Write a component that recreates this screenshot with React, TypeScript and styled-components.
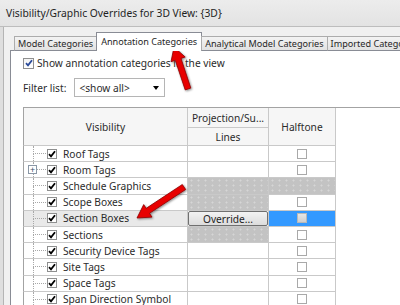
import { Fragment } from 'react';
import styled, { createGlobalStyle } from 'styled-components';

const GlobalStyle = createGlobalStyle`
	html, body {
		margin: 0;
		padding: 0;
		background: #f0f0f0;
	}
	body {
		width: 400px;
		height: 305px;
		overflow: hidden;
		font-family: 'Noto Sans', 'Liberation Sans', sans-serif;
		color: #2b2b2b;
	}
`;

const Window = styled.div`
	position: relative;
	width: 400px;
	height: 305px;
	overflow: hidden;
	display: flex;
	flex-direction: column;
	background: #f0f0f0;
`;

const TitleBar = styled.div`
	height: 26px;
	flex-shrink: 0;
	display: flex;
	align-items: center;
	padding-left: 6px;
	font-size: 10.3px;
	color: #1f1f1f;
	background: linear-gradient(#ececec, #e3e3e3);
	border-bottom: 1px solid #bdbdbd;
`;

const Body = styled.div`
	flex: 1;
	display: flex;
	flex-direction: column;
	padding: 5px 0 0 10px;
	background: linear-gradient(to right, #dedede 0 3px, #b4b4b4 3px 4px, #f0f0f0 4px);
`;

const TabStrip = styled.div`
	display: flex;
	align-items: flex-end;
	height: 19px;
	padding-left: 4px;
	margin-bottom: -1px;
	position: relative;
	z-index: 1;
`;

const Tab = styled.div<{ $active?: boolean }>`
	display: flex;
	align-items: center;
	white-space: nowrap;
	box-sizing: border-box;
	height: ${p => (p.$active ? '19px' : '15px')};
	padding: ${p => (p.$active ? '0 4px 2px' : '0 3px')};
	border: 1px solid ${p => (p.$active ? '#898c95' : '#acacac')};
	border-bottom: ${p => (p.$active ? 'none' : '1px solid #898c95')};
	background: ${p => (p.$active ? '#fff' : 'linear-gradient(#f3f3f3, #e2e2e2)')};
	font-size: 9.1px;
	color: #262626;
	margin-right: -1px;
`;

const Panel = styled.div`
	flex: 1;
	background: #fff;
	border: 1px solid #898c95;
	border-right: none;
	border-bottom: none;
	padding: 6px 0 0 12px;
`;

const OptionRow = styled.label`
	display: flex;
	align-items: center;
	gap: 3px;
	height: 12px;
	font-size: 10.2px;
`;

const BlueCheck = styled.span`
	width: 11px;
	height: 11px;
	box-sizing: border-box;
	border: 1px solid #8f8f8f;
	background: linear-gradient(#f4f4f4, #ffffff);
	display: flex;
	align-items: center;
	justify-content: center;
`;

const FilterRow = styled.div`
	display: flex;
	align-items: center;
	gap: 8px;
	margin-top: 9px;
	font-size: 10.2px;
`;

const Select = styled.div`
	width: 91px;
	height: 19px;
	box-sizing: border-box;
	border: 1px solid #b5b5b5;
	display: flex;
	align-items: center;
	justify-content: space-between;
	padding: 0 5px 0 4px;
	font-size: 10.2px;
`;

const Caret = styled.span`
	width: 0;
	height: 0;
	border-left: 3.5px solid transparent;
	border-right: 3.5px solid transparent;
	border-top: 4px solid #000;
`;

const Table = styled.div`
	margin-top: 10px;
	display: grid;
	grid-template-columns: 165px 81px 67px 1fr;
	grid-template-rows: 20px 18px;
	grid-auto-rows: 16.2px;
	border-top: 1px solid #a3a3a3;
	font-size: 10.2px;
`;

const HeadCell = styled.div<{ $rows?: number; $edge?: boolean; $blank?: boolean }>`
	grid-row: span ${p => p.$rows ?? 1};
	display: flex;
	align-items: center;
	justify-content: center;
	box-sizing: border-box;
	white-space: nowrap;
	overflow: hidden;
	background: ${p => (p.$blank ? '#fff' : '#f6f6f6')};
	border-left: ${p => (p.$edge ? '1px solid #a3a3a3' : 'none')};
	border-right: ${p => (p.$blank ? 'none' : '1px solid #c9c9c9')};
	border-bottom: ${p => (p.$blank ? 'none' : '1px solid #c9c9c9')};
`;

const VisCell = styled.div<{ $selected?: boolean }>`
	display: flex;
	align-items: stretch;
	box-sizing: border-box;
	padding-left: 9px;
	border-left: 1px solid #a3a3a3;
	border-right: 1px solid #c9c9c9;
	border-bottom: 1px solid #c9c9c9;
	background: ${p => (p.$selected ? '#e9e9e9' : '#fff')};
	white-space: nowrap;
`;

const Connector = styled.span`
	position: relative;
	width: 13px;
	display: flex;
	flex-direction: column;
	flex-shrink: 0;
`;

const ConnectorTop = styled.span`
	flex: 1;
	border-left: 1px dotted #a8a8a8;
	border-bottom: 1px dotted #a8a8a8;
`;

const ConnectorBottom = styled.span`
	flex: 1;
	border-left: 1px dotted #a8a8a8;
`;

const Expander = styled.span`
	position: absolute;
	left: -5px;
	top: 3px;
	width: 9px;
	height: 9px;
	box-sizing: border-box;
	border: 1px solid #8a97a6;
	background: #fff;
	display: flex;
	align-items: center;
	justify-content: center;
	font-size: 9px;
	line-height: 1;
	color: #3b4f6e;
`;

const TickBox = styled.span`
	align-self: center;
	width: 10px;
	height: 10px;
	box-sizing: border-box;
	margin-left: 1px;
	border: 1px solid #8e8f8f;
	background: #fff;
	display: flex;
	align-items: center;
	justify-content: center;
`;

const Label = styled.span`
	align-self: center;
	margin-left: 6px;
`;

const hatch = `
	background-color: #c3c3c3;
	background-image: radial-gradient(circle, #d6d6d6 0.7px, transparent 1.3px);
	background-size: 7px 5px;
`;

const LinesCell = styled.div<{ $kind: 'blank' | 'hatch' | 'button' }>`
	box-sizing: border-box;
	border-right: 1px solid #c9c9c9;
	border-bottom: 1px solid #c9c9c9;
	display: flex;
	align-items: stretch;
	${p => (p.$kind === 'hatch' ? hatch : 'background: #fff;')}
`;

const OverrideButton = styled.button`
	flex: 1;
	margin: 0;
	padding: 0;
	border: 1px solid #707070;
	border-radius: 2px;
	background: linear-gradient(#f3f3f3, #dcdcdc);
	font-family: inherit;
	font-size: 10.2px;
	color: #1e1e1e;
`;

const HalfCell = styled.div<{ $kind: 'check' | 'hatch' | 'selected' }>`
	box-sizing: border-box;
	border-right: 1px solid #c9c9c9;
	border-bottom: 1px solid #c9c9c9;
	display: flex;
	align-items: center;
	justify-content: center;
	${p =>
		p.$kind === 'hatch' ? hatch : p.$kind === 'selected' ? 'background: #3399ff;' : 'background: #fff;'}
`;

const HalfBox = styled.span<{ $dim?: boolean }>`
	width: 10px;
	height: 10px;
	box-sizing: border-box;
	border: 1px solid ${p => (p.$dim ? '#b8b8b8' : '#a9a9a9')};
	background: ${p => (p.$dim ? 'linear-gradient(#e6e6e6, #cfcfcf)' : '#fff')};
`;

const Filler = styled.div``;

const Overlay = styled.svg`
	position: absolute;
	left: 0;
	top: 0;
	pointer-events: none;
`;

const Check = ({ color }: { color: string }) => (
	<svg width='8' height='8' viewBox='0 0 8 8'>
		<path d='M1 4.2 L3 6.3 L7 1.2' fill='none' stroke={color} strokeWidth='1.8' />
	</svg>
);

type Row = {
	name: string;
	lines: 'blank' | 'hatch' | 'button';
	half: 'check' | 'hatch' | 'selected';
	expand?: boolean;
	selected?: boolean;
};

const rows: Row[] = [
	{ name: 'Roof Tags', lines: 'blank', half: 'check' },
	{ name: 'Room Tags', lines: 'blank', half: 'check', expand: true },
	{ name: 'Schedule Graphics', lines: 'hatch', half: 'hatch' },
	{ name: 'Scope Boxes', lines: 'hatch', half: 'check' },
	{ name: 'Section Boxes', lines: 'button', half: 'selected', selected: true },
	{ name: 'Sections', lines: 'hatch', half: 'check' },
	{ name: 'Security Device Tags', lines: 'blank', half: 'check' },
	{ name: 'Site Tags', lines: 'blank', half: 'check' },
	{ name: 'Space Tags', lines: 'blank', half: 'check' },
	{ name: 'Span Direction Symbol', lines: 'blank', half: 'check' },
];

// polygon for a straight arrow from tail (x1,y1) to tip (x2,y2)
const arrowPoints = (x1: number, y1: number, x2: number, y2: number, w: number, hw: number, hl: number) => {
	const len = Math.hypot(x2 - x1, y2 - y1);
	const ux = (x2 - x1) / len;
	const uy = (y2 - y1) / len;
	const nx = -uy;
	const ny = ux;
	const bx = x2 - ux * hl;
	const by = y2 - uy * hl;
	const pts = [
		[x1 + (nx * w) / 2, y1 + (ny * w) / 2],
		[bx + (nx * w) / 2, by + (ny * w) / 2],
		[bx + (nx * hw) / 2, by + (ny * hw) / 2],
		[x2, y2],
		[bx - (nx * hw) / 2, by - (ny * hw) / 2],
		[bx - (nx * w) / 2, by - (ny * w) / 2],
		[x1 - (nx * w) / 2, y1 - (ny * w) / 2],
	];
	return pts.map(p => p.map(v => v.toFixed(1)).join(',')).join(' ');
};

const App = () => {
	return (
		<Window>
			<GlobalStyle />
			<TitleBar>Visibility/Graphic Overrides for 3D View: {'{3D}'}</TitleBar>
			<Body>
				<TabStrip>
					<Tab>Model Categories</Tab>
					<Tab $active>Annotation Categories</Tab>
					<Tab>Analytical Model Categories</Tab>
					<Tab>Imported Categories</Tab>
				</TabStrip>
				<Panel>
					<OptionRow>
						<BlueCheck>
							<Check color='#2a4a9a' />
						</BlueCheck>
						Show annotation categories in the view
					</OptionRow>
					<FilterRow>
						Filter list:
						<Select>
							&lt;show all&gt;
							<Caret />
						</Select>
					</FilterRow>
					<Table>
						<HeadCell $rows={2} $edge>
							Visibility
						</HeadCell>
						<HeadCell>Projection/Su...</HeadCell>
						<HeadCell $rows={2}>Halftone</HeadCell>
						<HeadCell $rows={2} $blank />
						<HeadCell>Lines</HeadCell>
						{rows.map(row => (
							<Fragment key={row.name}>
								<VisCell $selected={row.selected}>
									<Connector>
										<ConnectorTop />
										<ConnectorBottom />
										{row.expand && <Expander>+</Expander>}
									</Connector>
									<TickBox>
										<Check color='#000' />
									</TickBox>
									<Label>{row.name}</Label>
								</VisCell>
								<LinesCell $kind={row.lines}>
									{row.lines === 'button' && <OverrideButton>Override...</OverrideButton>}
								</LinesCell>
								<HalfCell $kind={row.half}>
									{row.half !== 'hatch' && <HalfBox $dim={row.half === 'selected'} />}
								</HalfCell>
								<Filler />
							</Fragment>
						))}
					</Table>
				</Panel>
			</Body>
			<Overlay width='400' height='305'>
				<defs>
					<filter id='arrowShadow' x='-20%' y='-20%' width='140%' height='140%'>
						<feDropShadow dx='1' dy='1' stdDeviation='0.8' floodColor='#000' floodOpacity='0.45' />
					</filter>
				</defs>
				<polygon
					points={arrowPoints(188, 89, 174, 47, 6, 15, 13)}
					fill='#e80000'
					stroke='#8a0000'
					strokeWidth='0.8'
					filter='url(#arrowShadow)'
				/>
				<polygon
					points={arrowPoints(184, 187, 137, 218, 6, 15, 13)}
					fill='#e80000'
					stroke='#8a0000'
					strokeWidth='0.8'
					filter='url(#arrowShadow)'
				/>
			</Overlay>
		</Window>
	);
};

export default App;
